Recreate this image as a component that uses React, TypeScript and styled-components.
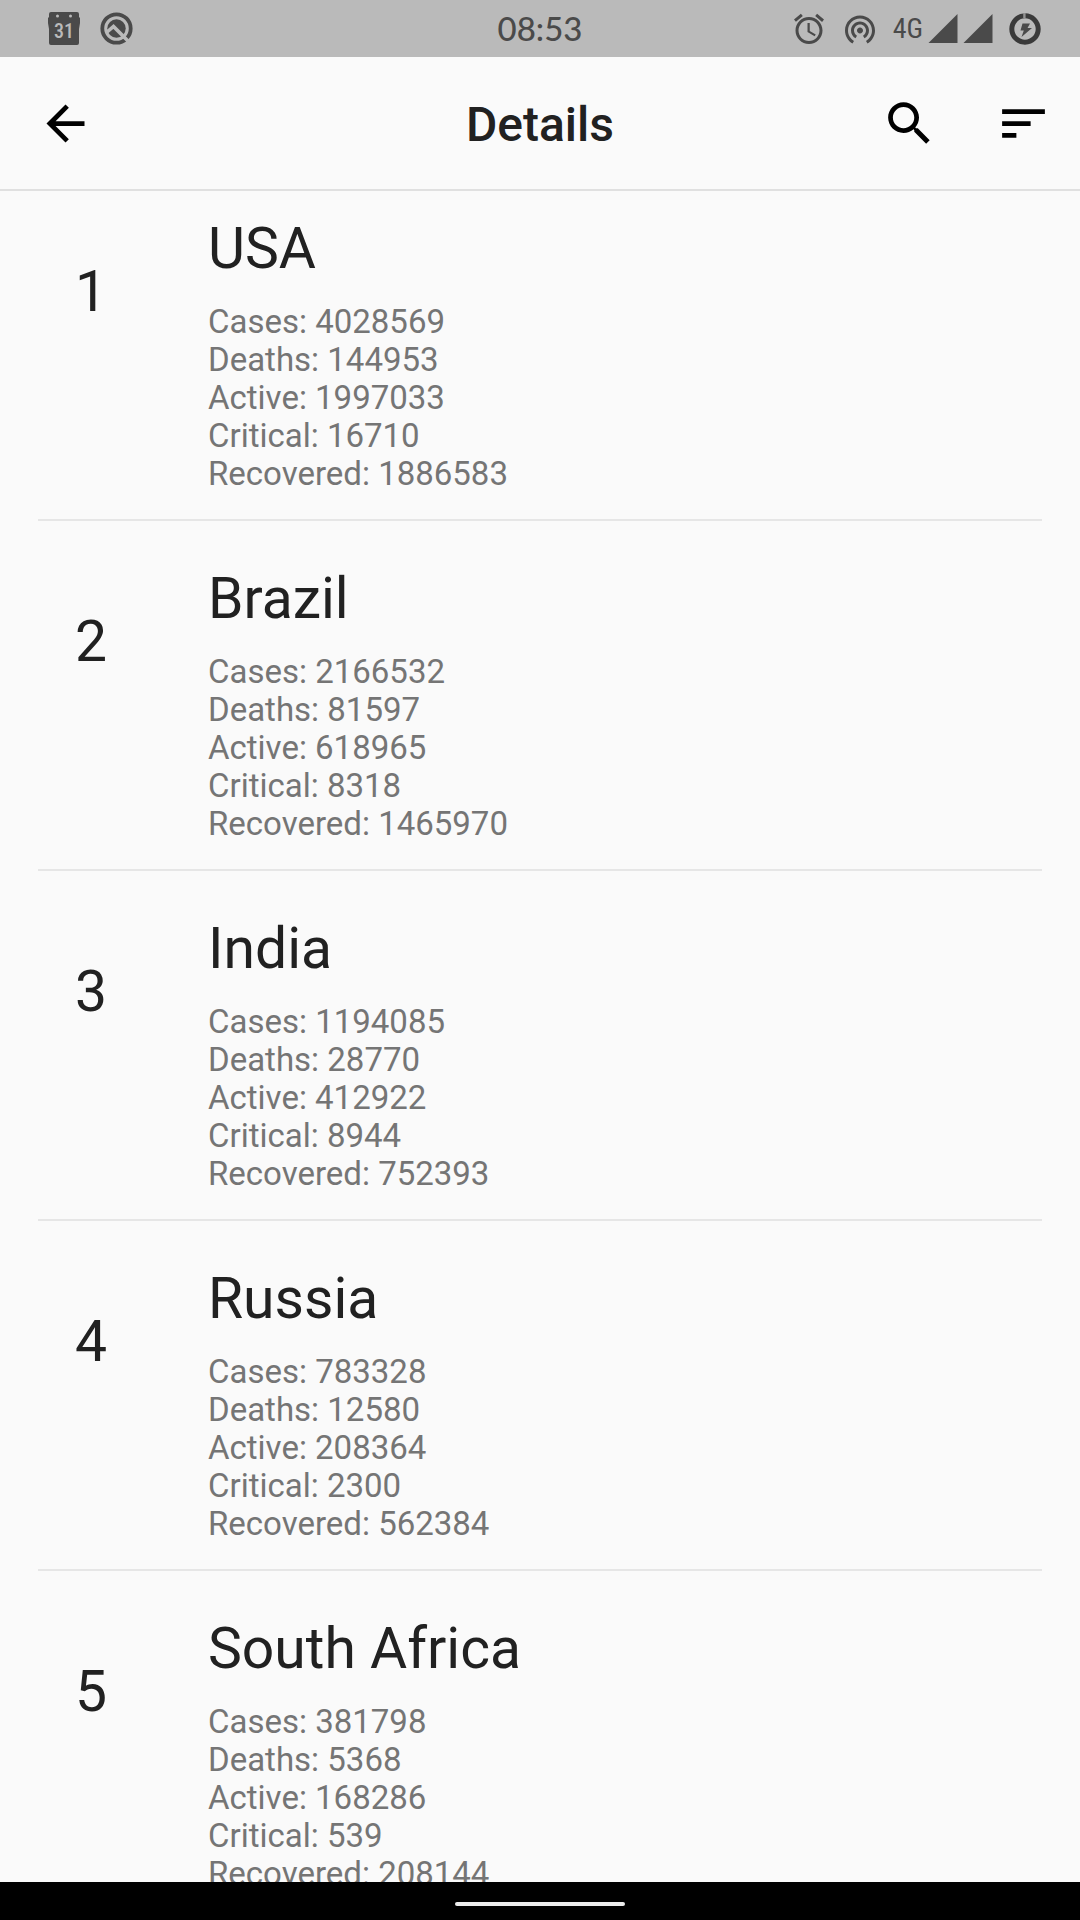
import React from "react";
import styled, { createGlobalStyle } from "styled-components";

const GlobalStyle = createGlobalStyle`
  *, *::before, *::after { box-sizing: border-box; }
  body {
    margin: 0;
    background: #fafafa;
    color: #212121;
    font-family: Roboto, "Liberation Sans", sans-serif;
  }
  h1, h2, p, ol, ul { margin: 0; padding: 0; font-weight: 400; }
  ol, ul { list-style: none; }
`;

const Screen = styled.div`
  display: flex;
  flex-direction: column;
  height: 100vh;
  overflow: hidden;
`;

const StatusBar = styled.div`
  display: grid;
  grid-template-columns: 1fr auto 1fr;
  align-items: center;
  flex: none;
  height: 57px;
  padding: 0 39px;
  background: #bababa;
  color: #4a4a4a;
`;

const Notifications = styled.div`
  display: flex;
  align-items: center;
  gap: 20px;
  padding-left: 9px;
`;

const SystemIcons = styled.div`
  display: flex;
  align-items: center;
  justify-content: flex-end;
  gap: 15px;
`;

const Clock = styled.time`
  padding-bottom: 2px;
  font-family: Lato, Roboto, sans-serif;
  font-size: 33px;
  font-weight: 500;
  line-height: 38px;
`;

const Signal = styled.div`
  display: flex;
  align-items: center;
  gap: 5px;
  padding-right: 1px;
  font-family: "Roboto Condensed", Roboto, sans-serif;
  font-size: 28px;
  line-height: 32px;
`;

const Glyph = styled.svg`
  display: block;
  flex: none;
  fill: currentColor;
`;

const DateText = styled.text`
  fill: #bababa;
  font-family: "Roboto Condensed", Roboto, sans-serif;
  font-size: 20px;
  font-weight: 500;
  text-anchor: middle;
`;

const AppBar = styled.header`
  display: grid;
  grid-template-columns: 1fr auto 1fr;
  align-items: center;
  flex: none;
  height: 134px;
  padding: 0 28px;
  border-bottom: 2px solid #e0e0e0;
`;

const Title = styled.h1`
  padding-top: 3px;
  font-size: 48px;
  font-weight: 500;
  line-height: 56px;
`;

const Leading = styled.div`
  display: flex;
  padding-left: 9px;
`;

const Actions = styled.div`
  display: flex;
  justify-content: flex-end;
  gap: 57px;
`;

const IconButton = styled.button`
  display: block;
  padding: 0;
  border: 0;
  background: none;
  color: #000;
  cursor: pointer;
`;

const List = styled.ol`
  flex: 1;
  min-height: 0;
  overflow: hidden;
`;

const Row = styled.li`
  display: grid;
  grid-template-columns: 106px 1fr;
  column-gap: 64px;
  margin: 0 38px 20px;
  padding: 24px 0 26px;
  border-bottom: 2px solid #e6e6e6;
`;

const Rank = styled.span`
  padding-top: 43px;
  font-size: 57px;
  line-height: 68px;
  text-align: center;
`;

const Country = styled.h2`
  margin-bottom: 20px;
  font-size: 57px;
  line-height: 68px;
`;

const Stat = styled.li`
  color: #757575;
  font-size: 33px;
  line-height: 38px;
`;

const NavBar = styled.nav`
  display: flex;
  justify-content: center;
  flex: none;
  height: 38px;
  padding-top: 20px;
  background: #000;
`;

const HomeHandle = styled.button`
  width: 170px;
  height: 4px;
  padding: 0;
  border: 0;
  border-radius: 2px;
  background: #ececec;
`;

const countries = [
  { name: "USA", cases: 4028569, deaths: 144953, active: 1997033, critical: 16710, recovered: 1886583 },
  { name: "Brazil", cases: 2166532, deaths: 81597, active: 618965, critical: 8318, recovered: 1465970 },
  { name: "India", cases: 1194085, deaths: 28770, active: 412922, critical: 8944, recovered: 752393 },
  { name: "Russia", cases: 783328, deaths: 12580, active: 208364, critical: 2300, recovered: 562384 },
  { name: "South Africa", cases: 381798, deaths: 5368, active: 168286, critical: 539, recovered: 208144 },
];

const CalendarIcon = () => (
  <Glyph width="32" height="33" viewBox="0 0 32 33" aria-hidden="true">
    <path
      fillRule="evenodd"
      d="M3 0h26a2 2 0 0 1 2 2v3l1 1v5l-1 6v14a2 2 0 0 1-2 2H3a2 2 0 0 1-2-2V17L0 11V6l1-1V2a2 2 0 0 1 2-2zM9.500 2.500a1.500 1.500 0 1 0 0 3a1.500 1.500 0 1 0 0-3zM22.500 2.500a1.500 1.500 0 1 0 0 3a1.500 1.500 0 1 0 0-3z"
    />
    <DateText x="16" y="26">
      31
    </DateText>
  </Glyph>
);

const QIcon = () => (
  <Glyph width="33" height="33" viewBox="0 0 33 33" aria-hidden="true">
    <circle cx="16.500" cy="16.500" r="14.200" fill="none" stroke="currentColor" strokeWidth="3.800" />
    <circle cx="16.500" cy="16.500" r="9.200" />
    <path d="M6.500 20.500L13.500 14.500L29 30" fill="none" stroke="#bababa" strokeWidth="3.600" />
  </Glyph>
);

const AlarmIcon = () => (
  <Glyph width="36" height="36" viewBox="0 0 24 24" aria-hidden="true">
    <path d="M22 5.720l-4.600-3.860-1.290 1.530 4.600 3.860L22 5.720zM7.880 3.390L6.600 1.860 2 5.710l1.290 1.530 4.590-3.850zM12.500 8H11v6l4.750 2.850.75-1.230-4-2.370V8zM12 4c-4.970 0-9 4.030-9 9s4.020 9 9 9c4.970 0 9-4.030 9-9s-4.030-9-9-9zm0 16c-3.870 0-7-3.130-7-7s3.130-7 7-7 7 3.130 7 7-3.130 7-7 7z" />
  </Glyph>
);

const HotspotIcon = () => (
  <Glyph width="36" height="36" viewBox="0 0 24 24" aria-hidden="true">
    <path d="M12 11c-1.100 0-2 .9-2 2s.9 2 2 2 2-.9 2-2-.9-2-2-2zm6 2c0-3.310-2.690-6-6-6s-6 2.690-6 6c0 2.220 1.210 4.150 3 5.190l1-1.740c-1.190-.7-2-1.970-2-3.450 0-2.210 1.790-4 4-4s4 1.790 4 4c0 1.480-.81 2.750-2 3.450l1 1.740c1.790-1.040 3-2.970 3-5.190zM12 3C6.480 3 2 7.480 2 13c0 3.700 2.010 6.920 4.990 8.650l1-1.730C5.610 18.530 4 15.960 4 13c0-4.420 3.580-8 8-8s8 3.580 8 8c0 2.960-1.610 5.530-4 6.920l1 1.730c2.990-1.730 5-4.950 5-8.650 0-5.520-4.480-10-10-10z" />
  </Glyph>
);

const SignalIcon = () => (
  <Glyph width="30" height="30" viewBox="0 0 30 30" aria-hidden="true">
    <path d="M0.500 29L29.500 0V29z" />
  </Glyph>
);

const BatteryIcon = () => (
  <Glyph width="32" height="32" viewBox="0 0 32 32" aria-hidden="true">
    <circle cx="16" cy="16" r="13.200" fill="none" stroke="#3a3a3a" strokeWidth="5" />
    <path d="M14.200 0h2.400v5h-2.400z" fill="#929292" />
    <path d="M13.500 10.500h7.500l-2.500 4.500H23L12.500 24l2.300-6.500H11.500z" />
  </Glyph>
);

const BarIcon = ({ d }: { d: string }) => (
  <Glyph width="57" height="57" viewBox="0 0 24 24" aria-hidden="true">
    <path d={d} />
  </Glyph>
);

export default function App() {
  return (
    <Screen>
      <GlobalStyle />
      <StatusBar>
        <Notifications>
          <CalendarIcon />
          <QIcon />
        </Notifications>
        <Clock>08:53</Clock>
        <SystemIcons>
          <AlarmIcon />
          <HotspotIcon />
          <Signal>
            4G
            <SignalIcon />
            <SignalIcon />
          </Signal>
          <BatteryIcon />
        </SystemIcons>
      </StatusBar>
      <AppBar>
        <Leading>
          <IconButton type="button" aria-label="Back">
            <BarIcon d="M20 11H7.830l5.590-5.590L12 4l-8 8 8 8 1.410-1.410L7.830 13H20v-2z" />
          </IconButton>
        </Leading>
        <Title>Details</Title>
        <Actions>
          <IconButton type="button" aria-label="Search">
            <BarIcon d="M15.500 14h-.79l-.28-.27C15.410 12.590 16 11.110 16 9.500 16 5.910 13.090 3 9.500 3S3 5.910 3 9.500 5.910 16 9.500 16c1.610 0 3.090-.59 4.230-1.570l.27.28v.79l5 4.990L20.490 19l-4.990-5zm-6 0C7.010 14 5 11.990 5 9.500S7.010 5 9.500 5 14 7.010 14 9.500 11.990 14 9.500 14z" />
          </IconButton>
          <IconButton type="button" aria-label="Sort">
            <BarIcon d="M3 18h6v-2H3v2zM3 6v2h18V6H3zm0 7h12v-2H3v2z" />
          </IconButton>
        </Actions>
      </AppBar>
      <List>
        {countries.map((c, i) => (
          <Row key={c.name}>
            <Rank>{i + 1}</Rank>
            <div>
              <Country>{c.name}</Country>
              <ul>
                <Stat>Cases: {c.cases}</Stat>
                <Stat>Deaths: {c.deaths}</Stat>
                <Stat>Active: {c.active}</Stat>
                <Stat>Critical: {c.critical}</Stat>
                <Stat>Recovered: {c.recovered}</Stat>
              </ul>
            </div>
          </Row>
        ))}
      </List>
      <NavBar>
        <HomeHandle type="button" aria-label="Home" />
      </NavBar>
    </Screen>
  );
}
